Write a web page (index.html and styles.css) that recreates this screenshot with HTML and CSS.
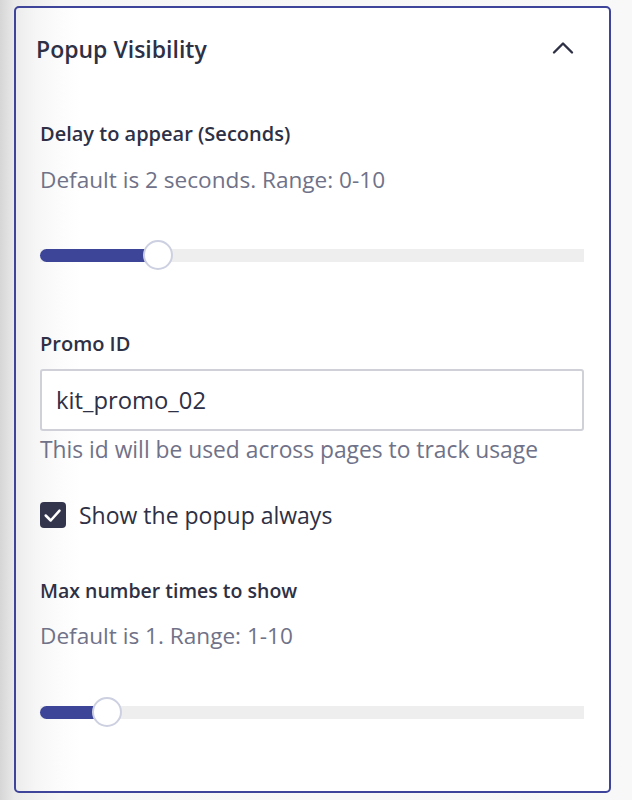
FILE: index.html
```html
<!DOCTYPE html>
<html>
<head>
<meta charset="utf-8">
<link rel="stylesheet" href="styles.css">
</head>
<body>
<section class="card">
  <header class="card-head">
    <h2 class="card-title">Popup Visibility</h2>
    <svg class="chevron" width="22" height="14" viewBox="0 0 22 14"><polyline points="2,11.5 11,2.5 20,11.5" fill="none" stroke="#2e3045" stroke-width="2.4" stroke-linecap="round" stroke-linejoin="round"/></svg>
  </header>
  <div class="card-body">
    <div class="label l1">Delay to appear (Seconds)</div>
    <div class="help h1">Default is 2 seconds. Range: 0-10</div>
    <div class="slider s1">
      <div class="track">
        <div class="fill" style="width: 118px"></div>
        <div class="thumb" style="left: 103px"></div>
      </div>
    </div>
    <div class="label l2">Promo ID</div>
    <div class="input">kit_promo_02</div>
    <div class="help h2">This id will be used across pages to track usage</div>
    <div class="check-row">
      <span class="checkbox"><svg width="26" height="26" viewBox="0 0 26 26"><polyline points="5.7,13.5 10.7,18.5 19.5,8.7" fill="none" stroke="#fff" stroke-width="2.5" stroke-linecap="round" stroke-linejoin="round"/></svg></span>
      <span class="check-label">Show the popup always</span>
    </div>
    <div class="label l3">Max number times to show</div>
    <div class="help h3">Default is 1. Range: 1-10</div>
    <div class="slider s2">
      <div class="track">
        <div class="fill" style="width: 67px"></div>
        <div class="thumb" style="left: 52px"></div>
      </div>
    </div>
  </div>
</section>
</body>
</html>
```
FILE: styles.css
```css
html, body {
  margin: 0;
  padding: 0;
}
body {
  width: 632px;
  height: 800px;
  overflow: hidden;
  background: linear-gradient(90deg, #d6d6d6 0px, #e9e9e9 14px, #f6f6f6 60px, #f8f8f8 100%);
  font-family: "Open Sans", "Liberation Sans", sans-serif;
  color: #2e3045;
}
.card {
  box-sizing: border-box;
  margin: 6px 0 0 14px;
  width: 597px;
  height: 787px;
  border: 2px solid #3d4499;
  border-radius: 5px;
  background: linear-gradient(90deg, #ececec 0px, #f6f6f6 20px, #fcfcfc 45px, #ffffff 65px);
}
.card-head {
  display: flex;
  align-items: center;
  justify-content: space-between;
  padding: 28px 35px 0 20px;
}
.card-title {
  margin: 0;
  font-size: 23px;
  line-height: 26px;
  font-weight: 600;
  color: #2e3045;
}
.chevron {
  display: block;
  margin-top: -2px;
}
.card-body {
  padding: 0 25px 0 24px;
}
.label {
  font-size: 20px;
  line-height: 22px;
  font-weight: 600;
  color: #2e3045;
}
.help {
  font-size: 22.6px;
  line-height: 24px;
  color: #6f7288;
}
.l1 { margin-top: 61px; }
.h1 { margin-top: 23px; }
.s1 { margin-top: 48px; }
.l2 { margin-top: 63px; }
.input {
  box-sizing: border-box;
  margin-top: 14px;
  height: 62px;
  border: 2px solid #cfd0d8;
  border-radius: 3px;
  padding: 0 14px;
  display: flex;
  align-items: center;
  font-size: 23.8px;
  color: #2e3045;
  background: #fff;
}
.h2 { margin-top: 7px; font-size: 22.8px; }
.check-row {
  margin-top: 40px;
  display: flex;
  align-items: center;
  gap: 13px;
  height: 26px;
}
.checkbox {
  width: 26px;
  height: 26px;
  border-radius: 4px;
  background: #33354d;
  display: block;
}
.checkbox svg { display: block; }
.check-label {
  font-size: 23px;
  line-height: 26px;
  color: #2e3045;
}
.l3 { margin-top: 52px; font-size: 19.5px; }
.h3 { margin-top: 22px; }
.s2 { margin-top: 49px; }
.slider {
  height: 30px;
  display: flex;
  align-items: center;
}
.track {
  position: relative;
  width: 100%;
  height: 13px;
  background: #eeeeee;
}
.fill {
  height: 100%;
  background: #3d4599;
  border-radius: 7px 0 0 7px;
}
.thumb {
  position: absolute;
  top: 50%;
  width: 30px;
  height: 30px;
  margin-top: -15px;
  box-sizing: border-box;
  border: 2px solid #cdd0e0;
  border-radius: 50%;
  background: #fff;
}
```
